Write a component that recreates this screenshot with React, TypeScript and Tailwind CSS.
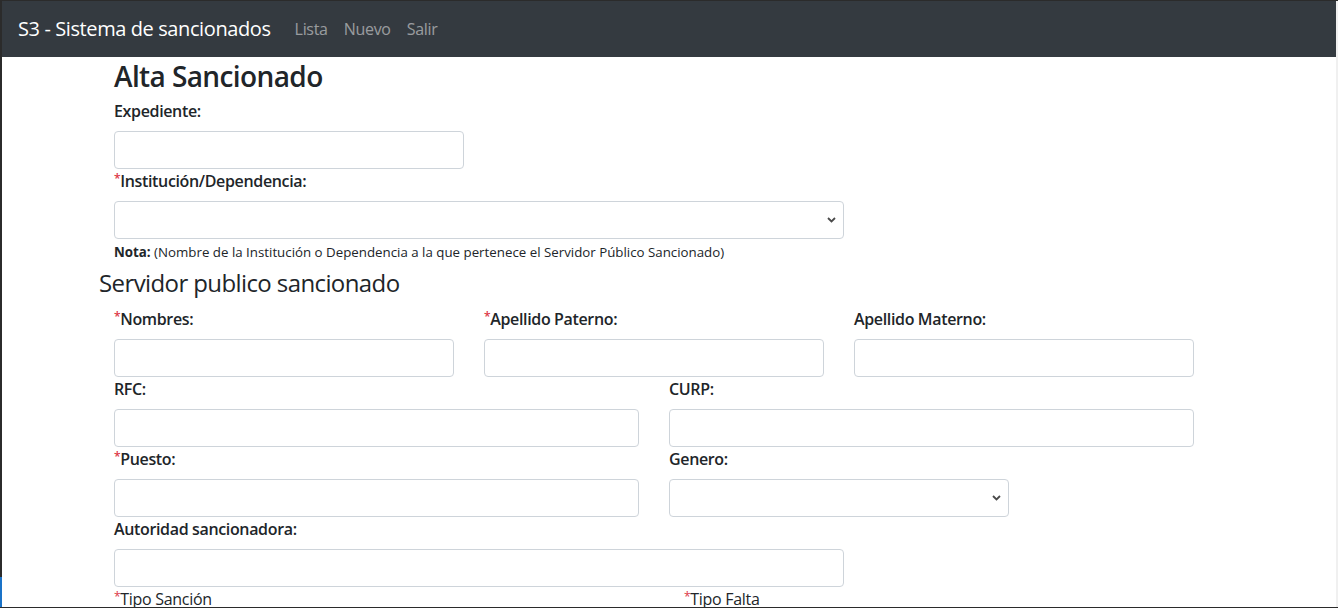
import React from "react";

const font = { fontFamily: "'Open Sans', 'Noto Sans', sans-serif" };

const Label = ({ req, children }: { req?: boolean; children: React.ReactNode }) => (
  <label className="block h-6 leading-6 mb-2 text-[16px] font-semibold tracking-[-0.35px] text-[#212529] whitespace-nowrap">
    {req && <span className="text-[#dc3545] text-[12px] align-top leading-[20px]">*</span>}
    {children}
  </label>
);

const Input = () => (
  <input className="block h-[38px] w-full rounded-[4px] border border-[#ced4da] bg-white outline-none" />
);

const Select = () => (
  <div className="relative h-[38px] w-full rounded-[4px] border border-[#ced4da] bg-white">
    <svg
      className="absolute right-[7px] top-[15px]"
      width="9"
      height="6"
      viewBox="0 0 9 6"
      fill="none"
    >
      <path d="M1 1l3.5 3.5L8 1" stroke="#4a4a4a" strokeWidth="1.8" />
    </svg>
  </div>
);

const Field = ({
  label,
  req,
  w,
  select,
}: {
  label: string;
  req?: boolean;
  w: string;
  select?: boolean;
}) => (
  <div className={w}>
    <Label req={req}>{label}</Label>
    {select ? <Select /> : <Input />}
  </div>
);

export default function App() {
  return (
    <div className="w-[1338px] h-[608px] overflow-hidden flex flex-col bg-white" style={font}>
      <div className="h-px bg-[#2b2b2b]" />
      <div className="flex flex-1 min-h-0">
        <div className="w-[2px] flex flex-col">
          <div className="flex-1 bg-[#2b2b2b]" />
          <div className="h-[30px] bg-[#1a73c8]" />
        </div>

        <main className="flex-1 min-w-0 overflow-hidden text-[#212529]">
          <nav className="h-[56px] bg-[#343a40] px-4 flex items-center">
            <span className="text-[20px] tracking-[-0.4px] text-white mr-4 leading-[30px]">
              S3 - Sistema de sancionados
            </span>
            <a className="px-2 text-[16px] tracking-[-0.3px] text-white/50">Lista</a>
            <a className="px-2 text-[16px] tracking-[-0.3px] text-white/50">Nuevo</a>
            <a className="px-2 text-[16px] tracking-[-0.3px] text-white/50">Salir</a>
          </nav>

          <div className="pl-[112px]">
            <h3 className="mt-[2px] h-[34px] leading-[34px] text-[28px] font-semibold tracking-[-0.6px] mb-[6px]">
              Alta Sancionado
            </h3>

            <Field label="Expediente:" w="w-[350px]" />
            <Field label="Institución/Dependencia:" req w="w-[730px]" select />
            <p className="mt-1 h-[19px] leading-[19px] text-[13.3px] whitespace-nowrap">
              <b className="font-bold">Nota:</b> (Nombre de la Institución o Dependencia a la que pertenece el
              Servidor Público Sancionado)
            </p>

            <div className="-ml-[15px] mt-[3px] h-[36px] leading-[36px] text-[24px] font-normal tracking-[-0.6px]">
              Servidor publico sancionado
            </div>

            <div className="mt-[6px] flex gap-[30px]">
              <Field label="Nombres:" req w="w-[340px]" />
              <Field label="Apellido Paterno:" req w="w-[340px]" />
              <Field label="Apellido Materno:" w="w-[340px]" />
            </div>
            <div className="flex gap-[30px]">
              <Field label="RFC:" w="w-[525px]" />
              <Field label="CURP:" w="w-[525px]" />
            </div>
            <div className="flex gap-[30px]">
              <Field label="Puesto:" req w="w-[525px]" />
              <Field label="Genero:" w="w-[340px]" select />
            </div>
            <Field label="Autoridad sancionadora:" w="w-[730px]" />
            <div className="flex h-[19px] overflow-visible">
              <div className="w-[570px] h-6 leading-6 text-[16px] tracking-[-0.3px] whitespace-nowrap">
                <span className="text-[#dc3545] text-[12px] align-top leading-[20px]">*</span>Tipo Sanción
              </div>
              <div className="h-6 leading-6 text-[16px] tracking-[-0.3px] whitespace-nowrap">
                <span className="text-[#dc3545] text-[12px] align-top leading-[20px]">*</span>Tipo Falta
              </div>
            </div>
          </div>
        </main>

        <div className="w-[2px] bg-[#f0f0f0]" />
      </div>
      <div className="h-px bg-[#2b2b2b]" />
    </div>
  );
}
